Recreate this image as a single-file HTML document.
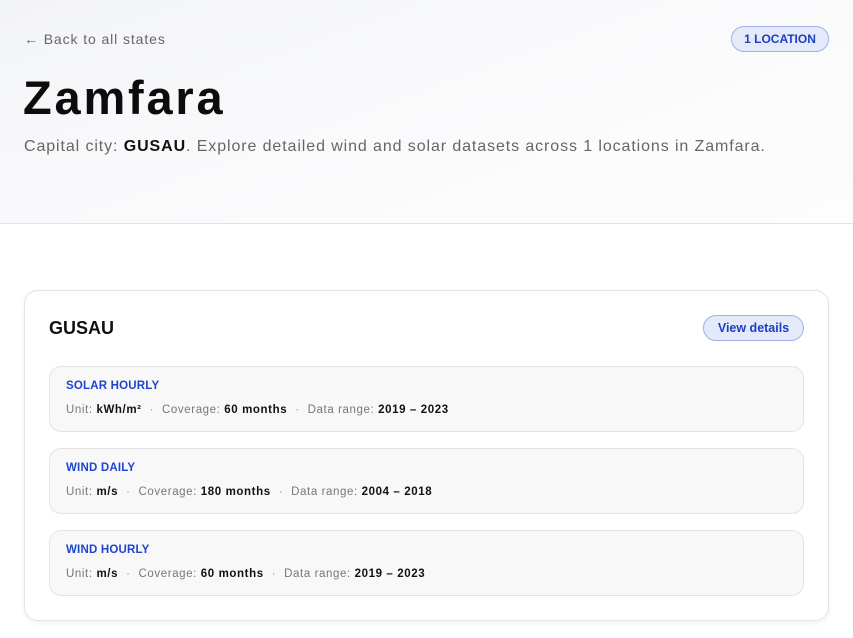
<!DOCTYPE html>
<html><head><style>
*{box-sizing:border-box;margin:0;padding:0}
body{width:853px;height:638px;overflow:hidden;background:#fff;font-family:"Liberation Sans",sans-serif;position:relative}
.hdr{position:absolute;left:0;top:0;width:853px;height:224px;background:linear-gradient(160deg,#f3f4f8 0%,#fbfbfc 60%,#fdfdfd 100%);border-bottom:1px solid #e2e2e4}
.back{position:absolute;left:24px;top:31px;font-size:14px;color:#666;letter-spacing:0.9px}
.badge{position:absolute;left:731px;top:26px;width:98px;height:26px;border:1px solid #9fb3ea;background:#e4eaf9;border-radius:13px;color:#1d3fc0;font-size:12px;font-weight:bold;text-align:center;line-height:24px}
h1{position:absolute;left:23px;top:70px;font-size:47px;font-weight:bold;color:#0c0c0c;letter-spacing:2.8px}
.sub{position:absolute;left:24px;top:138px;font-size:16px;color:#666;letter-spacing:0.9px}
.sub b{color:#111}
.card{position:absolute;left:24px;top:290px;width:805px;height:331px;border:1px solid #e3e3e3;border-radius:14px;box-shadow:0 2px 6px rgba(0,0,0,.06);background:#fff}
.name{position:absolute;left:24px;top:27px;font-size:18px;font-weight:bold;color:#111}
.btn{position:absolute;left:678px;top:24px;width:101px;height:26px;border:1px solid #9fb3ea;background:#e4eaf9;border-radius:13px;color:#1d3fc0;font-size:12.5px;font-weight:bold;text-align:center;line-height:24px}
.row{position:absolute;left:24px;width:755px;height:66px;border:1px solid #e4e4e4;border-radius:12px;background:#f8f8f8}
.row .t{position:absolute;left:16px;top:13px;font-size:11.5px;font-weight:bold;color:#1d45d0;letter-spacing:.2px}
.row .m{position:absolute;left:16px;top:37px;font-size:11.5px;color:#777;letter-spacing:0.6px}
.row .m b{color:#111}
.dot{margin:0 8px;color:#999}
</style></head><body>
<div class="hdr">
<div class="back">&#8592;&nbsp;Back to all states</div>
<div class="badge">1 LOCATION</div>
<h1>Zamfara</h1>
<div class="sub">Capital city: <b>GUSAU</b>. Explore detailed wind and solar datasets across 1 locations in Zamfara.</div>
</div>
<div class="card">
<div class="name">GUSAU</div>
<div class="btn">View details</div>
<div class="row" style="top:75px"><div class="t">SOLAR HOURLY</div><div class="m">Unit: <b>kWh/m²</b><span class="dot">·</span>Coverage: <b>60 months</b><span class="dot">·</span>Data range: <b>2019 – 2023</b></div></div>
<div class="row" style="top:157px"><div class="t">WIND DAILY</div><div class="m">Unit: <b>m/s</b><span class="dot">·</span>Coverage: <b>180 months</b><span class="dot">·</span>Data range: <b>2004 – 2018</b></div></div>
<div class="row" style="top:239px"><div class="t">WIND HOURLY</div><div class="m">Unit: <b>m/s</b><span class="dot">·</span>Coverage: <b>60 months</b><span class="dot">·</span>Data range: <b>2019 – 2023</b></div></div>
</div>
</body></html>
